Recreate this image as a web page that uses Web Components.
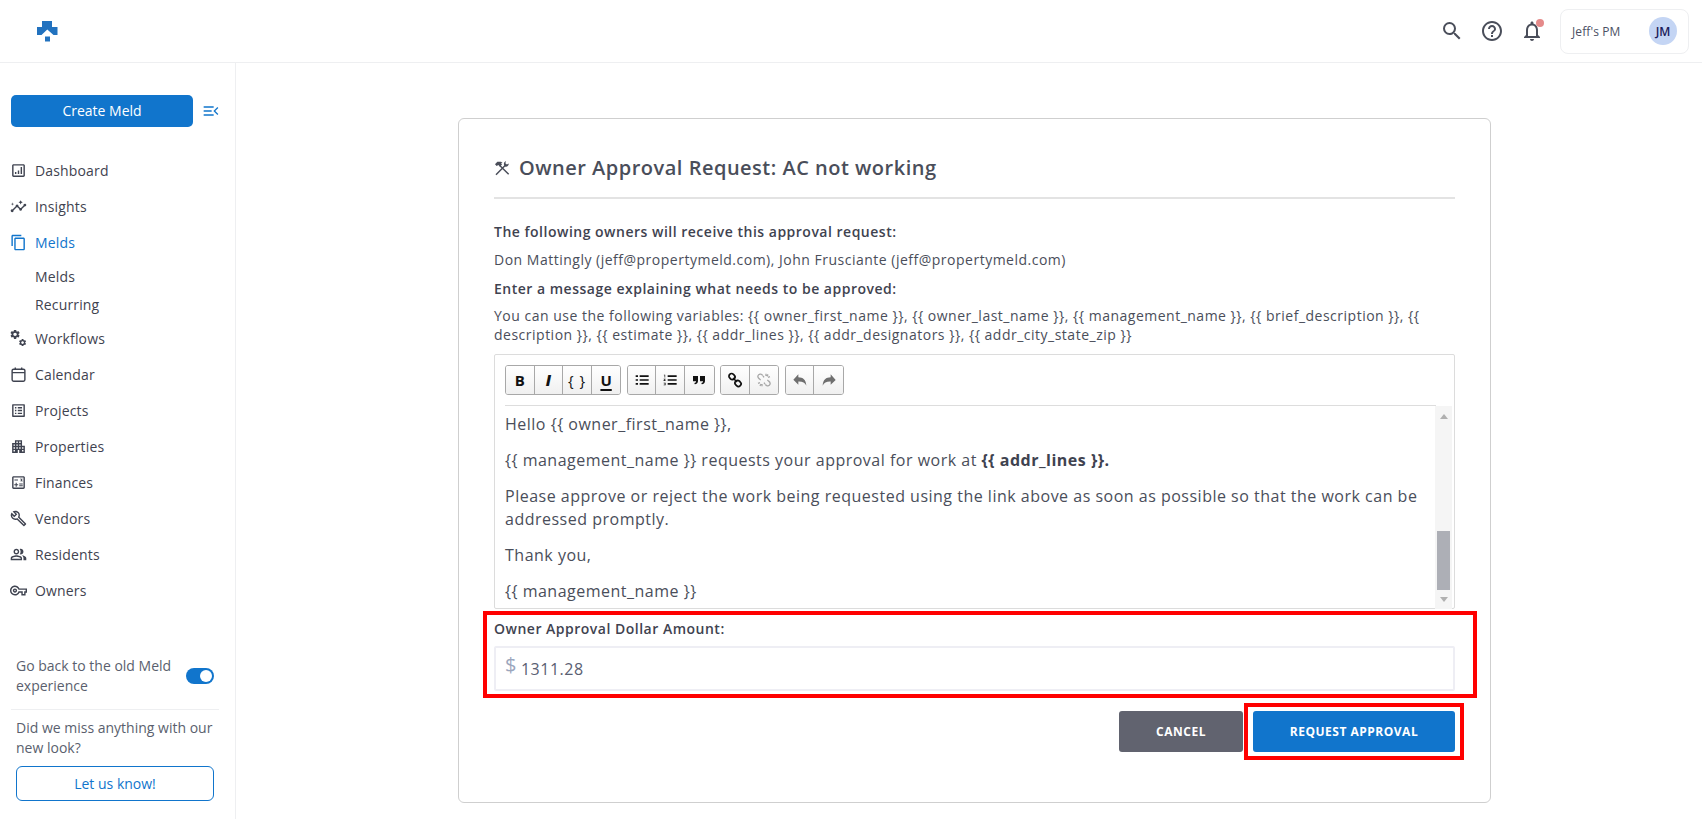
<!DOCTYPE html>
<html lang="en">
<head>
<meta charset="utf-8">
<title>Owner Approval Request</title>
<style>
  html, body { margin: 0; height: 100%; background: #fff; }
  body { font-family: "Open Sans", "Liberation Sans", sans-serif; overflow: hidden; }
</style>
</head>
<body>
<app-shell>
  <top-bar slot="top"></top-bar>
  <side-nav slot="side"></side-nav>
  <approval-card></approval-card>
</app-shell>

<script>
// icon paths, 24x24 box
const GEAR = 'M19.14 12.94c.04-.3.06-.61.06-.94 0-.32-.02-.64-.07-.94l2.03-1.58c.18-.14.23-.41.12-.61l-1.92-3.32c-.12-.22-.37-.29-.59-.22l-2.39.96c-.5-.38-1.03-.7-1.62-.94l-.36-2.54c-.04-.24-.24-.41-.48-.41h-3.84c-.24 0-.43.17-.47.41l-.36 2.54c-.59.24-1.13.57-1.62.94l-2.39-.96c-.22-.08-.47 0-.59.22L2.74 8.87c-.12.21-.08.47.12.61l2.03 1.58c-.05.3-.09.63-.09.94s.02.64.07.94l-2.03 1.58c-.18.14-.23.41-.12.61l1.92 3.32c.12.22.37.29.59.22l2.39-.96c.5.38 1.03.7 1.62.94l.36 2.54c.05.24.24.41.48.41h3.84c.24 0 .44-.17.47-.41l.36-2.54c.59-.24 1.13-.56 1.62-.94l2.39.96c.22.08.47 0 .59-.22l1.92-3.32c.12-.22.07-.47-.12-.61l-2.01-1.58zM12 15.6c-1.98 0-3.6-1.62-3.6-3.6s1.62-3.6 3.6-3.6 3.6 1.62 3.6 3.6-1.62 3.6-3.6 3.6z';
const ICONS = {
    search: '<path d="M15.5 14h-.79l-.28-.27A6.471 6.471 0 0 0 16 9.5 6.5 6.5 0 1 0 9.5 16c1.61 0 3.09-.59 4.23-1.57l.27.28v.79l5 4.99L20.49 19l-4.99-5zm-6 0C7.01 14 5 11.99 5 9.5S7.01 5 9.5 5 14 7.01 14 9.5 11.99 14 9.5 14z"/>',
    help: '<path d="M11 18h2v-2h-2v2zm1-16C6.48 2 2 6.48 2 12s4.48 10 10 10 10-4.48 10-10S17.52 2 12 2zm0 18c-4.41 0-8-3.59-8-8s3.59-8 8-8 8 3.59 8 8-3.59 8-8 8zm0-14c-2.21 0-4 1.79-4 4h2c0-1.1.9-2 2-2s2 .9 2 2c0 2-3 1.75-3 5h2c0-2.25 3-2.5 3-5 0-2.21-1.79-4-4-4z"/>',
    bell: '<path d="M12 22c1.1 0 2-.9 2-2h-4c0 1.1.9 2 2 2zm6-6v-5c0-3.07-1.63-5.64-4.5-6.32V4c0-.83-.67-1.5-1.5-1.5s-1.5.67-1.5 1.5v.68C7.64 5.36 6 7.92 6 11v5l-2 2v1h16v-1l-2-2zm-2 1H8v-6c0-2.48 1.51-4.5 4-4.5s4 2.02 4 4.5v6z"/>',
    dashboard: '<path d="M19 3H5c-1.1 0-2 .9-2 2v14c0 1.1.9 2 2 2h14c1.1 0 2-.9 2-2V5c0-1.1-.9-2-2-2zm0 16H5V5h14v14z"/><path d="M7 14h2v3H7zm4-2h2v5h-2zm4-5h2v10h-2z"/>',
    insights: '<path d="M21 8c-1.45 0-2.26 1.44-1.93 2.51l-3.55 3.56c-.3-.09-.74-.09-1.04 0l-2.55-2.55C12.27 10.45 11.46 9 10 9c-1.45 0-2.27 1.44-1.93 2.52l-4.56 4.55C2.44 15.74 1 16.55 1 18c0 1.1.9 2 2 2 1.45 0 2.26-1.44 1.93-2.51l4.55-4.56c.3.09.74.09 1.04 0l2.55 2.55C12.73 16.55 13.54 18 15 18c1.45 0 2.27-1.44 1.93-2.52l3.56-3.55c1.07.33 2.51-.48 2.51-1.93 0-1.1-.9-2-2-2z"/><path d="M15 9l.94-2.07L18 6l-2.06-.93L15 3l-.92 2.07L12 6l2.08.93zM3.5 11L4 9l2-.5L4 8l-.5-2L3 8l-2 .5L3 9z"/>',
    melds: '<path d="M16 1H4c-1.1 0-2 .9-2 2v14h2V3h12V1zm3 4H8c-1.1 0-2 .9-2 2v14c0 1.1.9 2 2 2h11c1.1 0 2-.9 2-2V7c0-1.1-.9-2-2-2zm0 16H8V7h11v14z"/>',
    workflows: `<g transform="translate(-1 -2) scale(.68)"><path d="${GEAR}"/></g><g transform="translate(11.500 11.500) scale(.52)"><path d="${GEAR}"/></g>`,
    calendar: '<rect x="3" y="4.500" width="18" height="17" rx="2" fill="none" stroke="currentColor" stroke-width="2"/><path d="M3 8.500h18v1.600H3zM6.500 2h2v3h-2zM15.500 2h2v3h-2z"/>',
    projects: '<path d="M19 5v14H5V5h14m1.1-2H3.9c-.5 0-.9.4-.9.9v16.2c0 .4.4.9.9.9h16.2c.4 0 .9-.5.9-.9V3.9c0-.5-.5-.9-.9-.9zM11 7h6v2h-6V7zm0 4h6v2h-6v-2zm0 4h6v2h-6zM7 7h2v2H7zm0 4h2v2H7zm0 4h2v2H7z"/>',
    properties: '<path d="M17 11V3H7v4H3v14h8v-4h2v4h8V11h-4zM7 19H5v-2h2v2zm0-4H5v-2h2v2zm0-4H5V9h2v2zm4 4H9v-2h2v2zm0-4H9V9h2v2zm0-4H9V5h2v2zm4 8h-2v-2h2v2zm0-4h-2V9h2v2zm0-4h-2V5h2v2zm4 12h-2v-2h2v2zm0-4h-2v-2h2v2z"/>',
    finances: '<path d="M19 3H5c-1.1 0-2 .9-2 2v14c0 1.1.9 2 2 2h14c1.1 0 2-.9 2-2V5c0-1.1-.9-2-2-2zm0 16H5V5h14v14z"/><path d="M6.25 7.72h5v1.5h-5zM13 15.75h5v1.5h-5zm0-2.5h5v1.5h-5zM8 18h1.5v-2h2v-1.5h-2v-2H8v2H6V16h2zm6.09-7.05l1.41-1.41 1.41 1.41 1.06-1.06-1.41-1.42 1.41-1.41L18.31 6 16.9 7.41 15.49 6l-1.06 1.06 1.41 1.41-1.41 1.42z"/>',
    vendors: '<path d="M22.61 18.99l-9.08-9.08c.93-2.34.45-5.1-1.44-7C9.79.61 6.21.4 3.66 2.26L7.5 6.11 6.08 7.52 2.25 3.69C.39 6.23.6 9.82 2.9 12.11c1.86 1.86 4.57 2.35 6.89 1.48l9.11 9.11c.39.39 1.02.39 1.41 0l2.3-2.3c.4-.38.4-1.01 0-1.41zm-3 1.6l-9.46-9.46c-.61.45-1.29.72-2 .82-1.36.2-2.79-.21-3.83-1.25C3.37 9.76 2.93 8.5 3 7.26l3.09 3.09 4.24-4.24-3.09-3.09c1.24-.07 2.49.37 3.44 1.31 1.08 1.08 1.49 2.57 1.24 3.96-.12.71-.42 1.37-.88 1.96l9.45 9.45-.88.88z"/>',
    residents: '<path d="M16.67 13.13C18.04 14.06 19 15.32 19 17v3h4v-3c0-2.18-3.57-3.47-6.33-3.87z"/><path d="M15 12c2.21 0 4-1.79 4-4s-1.79-4-4-4c-.47 0-.91.1-1.33.24C14.5 5.27 15 6.58 15 8s-.5 2.73-1.33 3.76c.42.14.86.24 1.33.24z"/><path d="M9 12c2.21 0 4-1.79 4-4s-1.79-4-4-4-4 1.79-4 4 1.79 4 4 4zm0-6c1.1 0 2 .9 2 2s-.9 2-2 2-2-.9-2-2 .9-2 2-2z"/><path d="M9 13c-2.67 0-8 1.34-8 4v3h16v-3c0-2.66-5.33-4-8-4zm6 5H3v-.99C3.2 16.29 6.3 15 9 15s5.8 1.29 6 2z"/>',
    owners: '<path d="M22 19h-6v-4h-2.68c-1.14 2.42-3.6 4-6.32 4-3.86 0-7-3.14-7-7s3.14-7 7-7c2.72 0 5.17 1.58 6.32 4H24v6h-2v4zm-4-2h2v-4h2v-2H11.94l-.23-.67C11.01 8.34 9.11 7 7 7c-2.76 0-5 2.24-5 5s2.24 5 5 5c2.11 0 4.01-1.34 4.71-3.33l.23-.67H18v4zM7 15c-1.65 0-3-1.35-3-3s1.35-3 3-3 3 1.35 3 3-1.35 3-3 3zm0-4c-.55 0-1 .45-1 1s.45 1 1 1 1-.45 1-1-.45-1-1-1z"/>',
    tools: '<path d="M9 8.500L22 21.500M17 8L3 22" fill="none" stroke="currentColor" stroke-width="2.200"/><path d="M1.500 6.500L5 2.500h5.500L13 4.500l-2.500 0.300 1.500 2-3 3.300-2.500-2.600-2.500 1.500z"/><path d="M15.500 8.500c-1.500-2.500-.5-5.500 2-6.500l.5-.2-1 3 2.300 1.800 2.800-1.300c.3 3-2.300 5.200-5 4.700z"/>',
    collapse: '<path d="M1 5h15v2H1zM1 11h12v2H1zM1 17h15v2H1zM23 7.400L18.400 12l4.600 4.600-1.400 1.400-6-6 6-6z"/>',
    list: '<path d="M2.500 5h3.500v2.600H2.500zM8.500 5H22v2.600H8.500zM2.500 10.700h3.500v2.600H2.500zM8.500 10.700H22v2.600H8.500zM2.500 16.400h3.500V19H2.500zM8.500 16.400H22V19H8.500z"/>',
    ordered: '<path d="M8.500 5H22v2.600H8.500zM8.500 10.700H22v2.600H8.500zM8.500 16.400H22V19H8.500zM2.800 4h2v4.200h-1V5H2.800zM2.400 10h3v1l-1.700 1.400h1.700v1h-3v-1L4 11H2.400zM2.400 16h3v4h-3v-1h2v-.5H3.100v-1h1.300V17h-2z"/>',
    quote: '<path d="M3 6h7.500v7.500c0 3-1.800 4.800-4.800 5l-.7-2c1.700-.3 2.500-1 2.600-2.500H3zM13.500 6H21v7.500c0 3-1.800 4.800-4.800 5l-.7-2c1.700-.3 2.500-1 2.600-2.500h-4.600z"/>',
    link: '<g fill="none" stroke="currentColor" stroke-width="2.600"><rect x="2.700" y="2.900" width="9.500" height="7.800" rx="3.900" transform="rotate(45 7.450 6.800)"/><rect x="11.800" y="13.300" width="9.500" height="7.800" rx="3.900" transform="rotate(45 16.550 17.200)"/></g><path d="M9 9l6 6" stroke="currentColor" stroke-width="2.400"/>',
    unlink: '<g fill="none" stroke="currentColor" stroke-width="2"><path d="M10 5.500C8.500 3 5.500 2.600 3.800 4.300S2.600 8.800 5 10.300l2 1.900M14 18.500c1.500 2.500 4.500 2.900 6.200 1.200s1.200-4.500-1.200-6l-2-1.900M12 8l-1.500-2M12 16l1.500 2"/><path d="M15 2.500v3.500M18 3.500l-1.500 3M21 7l-3 1M3 17l3-1M6 21l1.500-3M9 21.500V18"/></g>',
    undo: '<path d="M9.500 3.500v4.400c6.800.2 11.500 3.500 12 12.600-2-4.800-6-6.300-12-6.100v4.600L2 11.500z"/>',
    redo: '<path d="M14.500 3.500v4.400c-6.800.2-11.500 3.500-12 12.600 2-4.800 6-6.300 12-6.100v4.600l7.500-7z"/>'
};

class AppIcon extends HTMLElement {
    connectedCallback() {
        const name = this.getAttribute('name');
        const size = this.getAttribute('size') || 24;
        this.attachShadow({ mode: 'open' }).innerHTML = `
            <style>
                :host { display: inline-flex; flex: none; color: inherit; }
                svg { display: block; fill: currentColor; }
            </style>
            <svg viewBox="0 0 24 24" width="${size}" height="${size}" aria-hidden="true">${ICONS[name] || ''}</svg>`;
    }
}
customElements.define('app-icon', AppIcon);

class AppShell extends HTMLElement {
    constructor() {
        super();
        this.attachShadow({ mode: 'open' }).innerHTML = `
            <style>
                :host { display: grid; grid-template-columns: 236px 1fr; grid-template-rows: 63px 1fr; height: 819px; overflow: hidden; }
                .top { grid-column: 1 / 3; }
                main { padding: 55px 0 0 222px; min-width: 0; }
            </style>
            <div class="top"><slot name="top"></slot></div>
            <slot name="side"></slot>
            <main><slot></slot></main>`;
    }
}
customElements.define('app-shell', AppShell);

class TopBar extends HTMLElement {
    constructor() {
        super();
        this.attachShadow({ mode: 'open' }).innerHTML = `
            <style>
                :host { display: flex; align-items: center; height: 63px; box-sizing: border-box; border-bottom: 1px solid #eeeff1; padding: 0 13px 0 37px; }
                .logo { display: block; }
                .tools { margin-left: auto; display: flex; align-items: center; gap: 16px; color: #4a4e5a; }
                .bell { position: relative; display: flex; }
                .bell i { position: absolute; top: 0; right: 0; width: 8px; height: 8px; border-radius: 50%; background: #e58a8a; }
                .account { width: 129px; height: 45px; box-sizing: border-box; border: 1px solid #eeeff1; border-radius: 8px; display: flex; align-items: center; justify-content: space-between; padding: 0 11px; font-size: 12px; letter-spacing: .1px; color: #4a5064; }
                .avatar { width: 28px; height: 28px; border-radius: 50%; background: #c4d5f4; color: #1c1c5a; font-size: 12px; font-weight: 600; letter-spacing: 0; display: flex; align-items: center; justify-content: center; }
            </style>
            <svg class="logo" width="21" height="21" viewBox="0 0 21 21" fill="#2272bf">
                <path d="M0 6h5V0h10v6h5.500v8h-4L10.300 8.500 4.500 14H0z"/><path d="M8 15.500h5V20.500H8z"/>
            </svg>
            <div class="tools">
                <app-icon name="search"></app-icon>
                <app-icon name="help"></app-icon>
                <span class="bell"><app-icon name="bell"></app-icon><i></i></span>
                <div class="account"><span>Jeff's PM</span><span class="avatar">JM</span></div>
            </div>`;
    }
}
customElements.define('top-bar', TopBar);

class NavItem extends HTMLElement {
    constructor() {
        super();
        const icon = this.getAttribute('icon');
        this.attachShadow({ mode: 'open' }).innerHTML = `
            <style>
                :host { display: flex; align-items: center; gap: 8px; height: 36px; padding-left: 10px; font-size: 14px; font-weight: 500; letter-spacing: .15px; color: #3f4350; }
                :host([active]) { color: #1175cc; }
                :host([sub]) { height: 28px; padding-left: 35px; }
                app-icon { color: #3f4350; }
                :host([active]) app-icon { color: #1175cc; }
            </style>
            ${icon ? `<app-icon name="${icon}" size="17"></app-icon>` : ''}
            <span><slot></slot></span>`;
    }
}
customElements.define('nav-item', NavItem);

class SideNav extends HTMLElement {
    constructor() {
        super();
        this.attachShadow({ mode: 'open' }).innerHTML = `
            <style>
                :host { display: flex; flex-direction: column; height: 756px; box-sizing: border-box; border-right: 1px solid #eeeff1; padding: 32px 0 18px; }
                .create { display: flex; align-items: center; gap: 10px; padding-left: 11px; margin-bottom: 25px; }
                .create button { width: 182px; height: 32px; border: 0; border-radius: 5px; background: #1175cc; color: #fff; font: 400 14px "Open Sans", sans-serif; padding: 0 0 1px; }
                .create app-icon { color: #1175cc; }
                .sub { padding: 2px 0; display: flex; flex-direction: column; }
                footer { margin-top: auto; font-size: 14px; line-height: 20px; color: #5a5f6e; }
                .old { display: flex; justify-content: space-between; align-items: center; padding: 0 21px 0 16px; height: 40px; }
                .old span { width: 160px; }
                .toggle { width: 28px; height: 16px; border-radius: 8px; background: #1175cc; position: relative; }
                .toggle i { position: absolute; top: 2px; right: 2px; width: 12px; height: 12px; border-radius: 50%; background: #fff; }
                hr { border: 0; border-top: 1px solid #eeeff1; margin: 13px 16px 8px 11px; }
                .miss { padding: 0 16px; }
                .know { display: block; box-sizing: border-box; margin: 8px 21px 0 16px; height: 35px; line-height: 33px; text-align: center; border: 1px solid #1175cc; border-radius: 6px; color: #1175cc; }
            </style>
            <div class="create"><button>Create Meld</button><app-icon name="collapse" size="16"></app-icon></div>
            <nav-item icon="dashboard">Dashboard</nav-item>
            <nav-item icon="insights">Insights</nav-item>
            <nav-item icon="melds" active>Melds</nav-item>
            <div class="sub"><nav-item sub>Melds</nav-item><nav-item sub>Recurring</nav-item></div>
            <nav-item icon="workflows">Workflows</nav-item>
            <nav-item icon="calendar">Calendar</nav-item>
            <nav-item icon="projects">Projects</nav-item>
            <nav-item icon="properties">Properties</nav-item>
            <nav-item icon="finances">Finances</nav-item>
            <nav-item icon="vendors">Vendors</nav-item>
            <nav-item icon="residents">Residents</nav-item>
            <nav-item icon="owners">Owners</nav-item>
            <footer>
                <div class="old"><span>Go back to the old Meld experience</span><div class="toggle"><i></i></div></div>
                <hr>
                <div class="miss">Did we miss anything with our new look?</div>
                <span class="know">Let us know!</span>
            </footer>`;
    }
}
customElements.define('side-nav', SideNav);

class ToolButton extends HTMLElement {
    constructor() {
        super();
        const icon = this.getAttribute('icon');
        this.attachShadow({ mode: 'open' }).innerHTML = `
            <style>
                :host { display: flex; align-items: center; justify-content: center; width: 28.6px; height: 28px; box-sizing: border-box; background: linear-gradient(#fff, #f0f0f0); color: #111; font: 700 15px "Open Sans", sans-serif; border-right: 1px solid #a8a8a8; }
                :host(:last-child) { border-right: 0; }
                :host([muted]) { color: #a8a8a8; }
                :host([soft]) { color: #6f6f6f; }
            </style>
            ${icon ? `<app-icon name="${icon}" size="16"></app-icon>` : ''}<slot></slot>`;
    }
}
customElements.define('tool-button', ToolButton);

class RichEditor extends HTMLElement {
    constructor() {
        super();
        this.attachShadow({ mode: 'open' }).innerHTML = `
            <style>
                :host { display: block; height: 255px; box-sizing: border-box; border: 1px solid #dcdcdc; border-radius: 2px; }
                .bar { display: flex; gap: 5.500px; margin: 0 18px 0 10px; padding: 10px 0; border-bottom: 1px solid #ddd; height: 30px; }
                .group { display: flex; border: 1px solid #a8a8a8; border-radius: 3px; overflow: hidden; height: 28px; }
                .i { font-style: italic; font-weight: 800; }
                .u { text-decoration: underline 2px; text-underline-offset: 3px; }
                .mono { font-weight: 500; letter-spacing: 1px; }
                .body { display: flex; height: 203px; }
                .text { flex: 1; padding: 7px 10px 0 10px; font-size: 16px; line-height: 23px; letter-spacing: .5px; color: #4a4e5a; overflow: hidden; }
                p { margin: 0 0 13px; }
                b { font-weight: 700; color: #3f4350; }
                .scroll { width: 17px; margin-right: 2px; background: #f5f5f5; display: flex; flex-direction: column; align-items: center; }
                .up, .down { width: 0; height: 0; border: 4px solid transparent; }
                .up { border-bottom: 5px solid #b0b0b0; margin-top: 4px; }
                .down { border-top: 5px solid #b0b0b0; margin-bottom: 3px; }
                .thumb { width: 13px; height: 59px; background: #adafb6; margin-top: auto; margin-bottom: 7px; }
            </style>
            <div class="bar">
                <div class="group">
                    <tool-button>B</tool-button>
                    <tool-button><span class="i">I</span></tool-button>
                    <tool-button><span class="mono">{ }</span></tool-button>
                    <tool-button><span class="u">U</span></tool-button>
                </div>
                <div class="group">
                    <tool-button icon="list"></tool-button>
                    <tool-button icon="ordered"></tool-button>
                    <tool-button icon="quote"></tool-button>
                </div>
                <div class="group">
                    <tool-button icon="link"></tool-button>
                    <tool-button icon="unlink" muted></tool-button>
                </div>
                <div class="group">
                    <tool-button icon="undo" soft></tool-button>
                    <tool-button icon="redo" soft></tool-button>
                </div>
            </div>
            <div class="body">
                <div class="text">
                    <p>Hello {{ owner_first_name }},</p>
                    <p>{{ management_name }} requests your approval for work at <b>{{ addr_lines }}.</b></p>
                    <p>Please approve or reject the work being requested using the link above as soon as possible so that the work can be addressed promptly.</p>
                    <p>Thank you,</p>
                    <p>{{ management_name }}</p>
                </div>
                <div class="scroll"><i class="up"></i><i class="thumb"></i><i class="down"></i></div>
            </div>`;
    }
}
customElements.define('rich-editor', RichEditor);

class AmountField extends HTMLElement {
    constructor() {
        super();
        this.attachShadow({ mode: 'open' }).innerHTML = `
            <style>
                :host { display: block; border: 4px solid #f00; margin: 2px -22px 0 -11px; padding: 5px 18px 3px 7px; }
                label { display: block; font-size: 14px; line-height: 18px; font-weight: 600; letter-spacing: .5px; color: #3f4350; margin-bottom: 8px; }
                .input { height: 45px; box-sizing: border-box; border: 2px solid #eeeef4; border-radius: 2px; display: flex; align-items: center; padding-left: 9px; font-size: 16px; letter-spacing: .5px; color: #5a6072; }
                .sign { color: #9ba6bd; font-size: 20px; margin: -8px 4px 0 0; }
            </style>
            <label>Owner Approval Dollar Amount:</label>
            <div class="input"><span class="sign">$</span><span>1311.28</span></div>`;
    }
}
customElements.define('amount-field', AmountField);

class ApprovalCard extends HTMLElement {
    constructor() {
        super();
        this.attachShadow({ mode: 'open' }).innerHTML = `
            <style>
                :host { display: block; width: 1033px; height: 685px; box-sizing: border-box; border: 1px solid #cfcfcf; border-radius: 6px; padding: 35px 35px 0; font-size: 14px; color: #4a4e5a; }
                h1 { display: flex; align-items: center; gap: 9px; margin: 0; height: 28px; font-size: 20px; line-height: 28px; font-weight: 600; letter-spacing: .5px; color: #4a4e5a; }
                .rule { height: 2px; background: #e3e3e3; margin: 15px 0 24px; }
                .lead { font-weight: 600; color: #3f4350; letter-spacing: .5px; line-height: 18px; }
                .line { letter-spacing: .5px; line-height: 19px; }
                .gap-a { margin-top: 9px; }
                .gap-b { margin-top: 11px; }
                .gap-c { margin-top: 8px; }
                rich-editor { margin-top: 10px; }
                .actions { display: flex; justify-content: flex-end; align-items: center; margin: 5px -9px 0 0; }
                button { border: 0; border-radius: 3px; height: 41px; padding: 0; color: #fff; font: 700 12px "Open Sans", sans-serif; letter-spacing: .5px; text-transform: uppercase; }
                .cancel { width: 124px; background: #61636f; }
                .mark { border: 4px solid #f00; padding: 4px 5px; margin-left: 1px; display: flex; }
                .request { width: 202px; background: #1175cc; }
            </style>
            <h1><app-icon name="tools" size="16"></app-icon><span>Owner Approval Request: AC not working</span></h1>
            <div class="rule"></div>
            <div class="lead">The following owners will receive this approval request:</div>
            <div class="line gap-a">Don Mattingly (jeff@propertymeld.com), John Frusciante (jeff@propertymeld.com)</div>
            <div class="lead gap-b">Enter a message explaining what needs to be approved:</div>
            <div class="line gap-c">You can use the following variables: {{ owner_first_name }}, {{ owner_last_name }}, {{ management_name }}, {{ brief_description }}, {{ description }}, {{ estimate }}, {{ addr_lines }}, {{ addr_designators }}, {{ addr_city_state_zip }}</div>
            <rich-editor></rich-editor>
            <amount-field></amount-field>
            <div class="actions">
                <button class="cancel">Cancel</button>
                <div class="mark"><button class="request">Request Approval</button></div>
            </div>`;
    }
}
customElements.define('approval-card', ApprovalCard);
</script>
</body>
</html>
